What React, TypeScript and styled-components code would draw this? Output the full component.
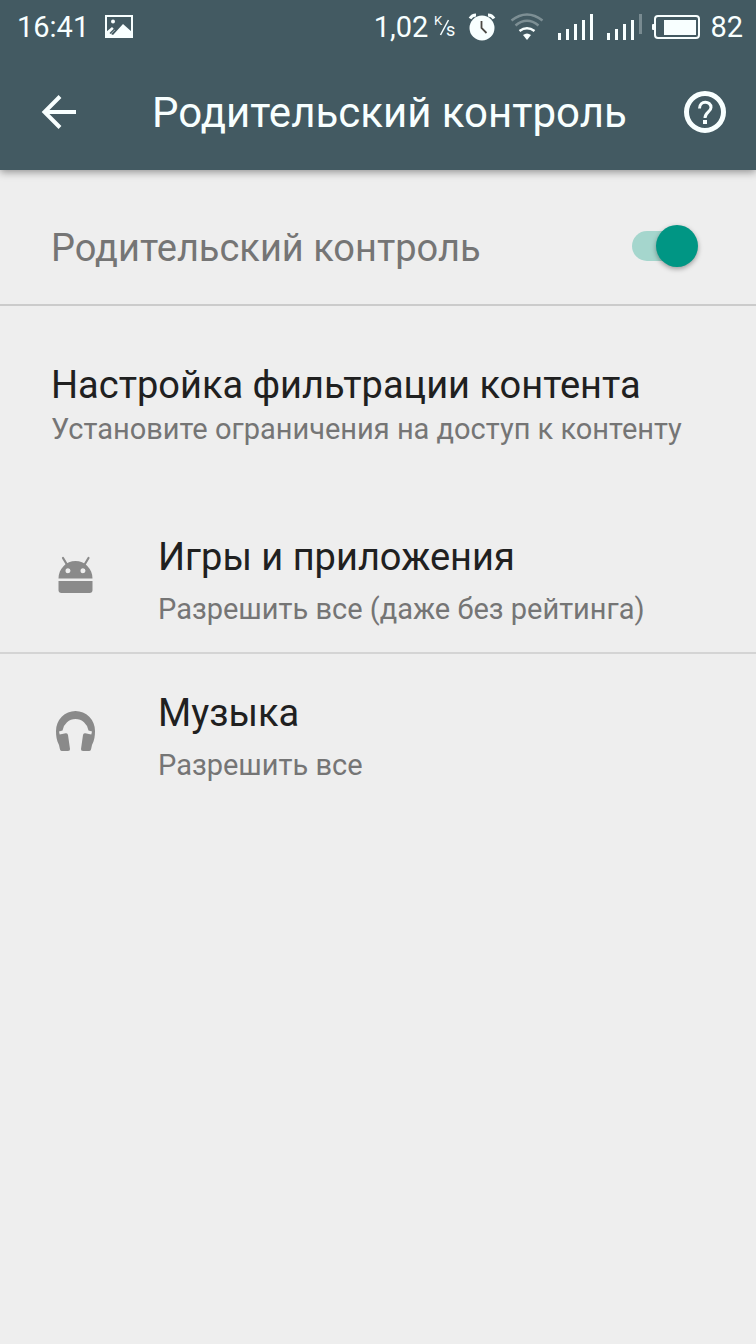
import React, { useState } from "react";
import styled, { createGlobalStyle } from "styled-components";

const GlobalStyle = createGlobalStyle`
  *, *::before, *::after { box-sizing: border-box; }
  body {
    margin: 0;
    background: #eeeeee;
    font-family: Roboto, "Noto Sans", sans-serif;
  }
  button { font: inherit; color: inherit; border: 0; background: none; padding: 0; cursor: pointer; }
  svg { display: block; flex: none; }
`;

const Header = styled.header`
  position: relative;
  background: #435a62;
  color: #f8ffff;
  box-shadow: 0 2px 8px rgba(0, 0, 0, 0.4);
`;

const StatusBar = styled.div`
  display: flex;
  align-items: center;
  justify-content: space-between;
  height: 54px;
  padding: 0 13px 0 17px;
  font-size: 29px;
  line-height: 34px;
`;

const StatusGroup = styled.div<{ $gap: number }>`
  display: flex;
  align-items: center;
  gap: ${(p) => p.$gap}px;
`;

const Toolbar = styled.div`
  display: flex;
  align-items: center;
  height: 116px;
  padding: 0 29px 0 38px;
`;

const IconButton = styled.button`
  display: flex;
  flex: none;
`;

const Title = styled.h1`
  flex: 1;
  margin: 0 0 0 72px;
  padding-top: 2px;
  font-size: 42px;
  line-height: 50px;
  font-weight: 400;
  white-space: nowrap;
`;

const SwitchRow = styled.label`
  display: flex;
  align-items: center;
  justify-content: space-between;
  height: 136px;
  padding: 22px 56px 0 51px;
  border-bottom: 2px solid #cbcbcb;
  color: #757575;
  font-size: 38px;
  line-height: 46px;
`;

const Switch = styled.input`
  appearance: none;
  display: flex;
  align-items: center;
  width: 66px;
  height: 30px;
  margin: 0 2px 4px 0;
  border-radius: 15px;
  background: linear-gradient(to right, #a5d6cd 52px, transparent 52px);
  cursor: pointer;

  &::before {
    content: "";
    width: 42px;
    height: 42px;
    flex: none;
    border-radius: 50%;
    background: #fafafa;
    box-shadow: 0 2px 5px rgba(0, 0, 0, 0.35);
  }
  &:checked::before {
    margin-left: 24px;
    background: #009684;
  }
`;

const Intro = styled.section`
  padding: 56px 51px 0;
`;

const Heading = styled.h2`
  margin: 0;
  color: #202020;
  font-size: 38px;
  line-height: 46px;
  font-weight: 400;
`;

const Summary = styled.span`
  display: block;
  color: #757575;
  font-size: 29px;
  line-height: 42px;
`;

const List = styled.ul`
  margin: 48px 0 0;
  padding: 0;
  list-style: none;
`;

const Item = styled.li`
  & + & { border-top: 2px solid #d4d4d4; }
`;

const ItemButton = styled.button`
  display: flex;
  align-items: center;
  gap: 58px;
  width: 100%;
  height: 154px;
  padding: 0 51px;
  text-align: left;
  color: #8a8a8a;
`;

const ItemText = styled.span`
  padding-top: 14px;
`;

const ItemTitle = styled.span`
  display: block;
  margin-bottom: 8px;
  color: #202020;
  font-size: 38px;
  line-height: 46px;
`;

const PictureIcon = () => (
  <svg width="28" height="24" viewBox="0 0 28 24" aria-hidden="true">
    <path d="M1 1h26v21H1z" fill="none" stroke="currentColor" strokeWidth="2" />
    <circle cx="8" cy="6.500" r="2" fill="currentColor" />
    <path d="M1 22v-5l6-5 3 3-4 4 2 1 10-11 9 8v6z" fill="currentColor" />
    <path d="M5 18.500l5-5" stroke="#435a62" strokeWidth="1.500" />
  </svg>
);

const PerSecond = () => (
  <svg width="24" height="34" viewBox="0 -5 24 34" role="img" aria-label="K/s" fill="currentColor">
    <text x="2" y="10" fontSize="13">K</text>
    <path d="M16.500 5L8.500 20" stroke="currentColor" strokeWidth="1.500" />
    <text x="14" y="21" fontSize="18">s</text>
  </svg>
);

const AlarmIcon = () => (
  <svg width="28" height="28" viewBox="0 0 28 28" aria-hidden="true">
    <path d="M2 5.500Q4 2 8 2M20 2q4 0 6 3.500" fill="none" stroke="currentColor" strokeWidth="3" />
    <circle cx="14" cy="15" r="12.500" fill="currentColor" />
    <path d="M13.500 8v7l5 5" fill="none" stroke="#4d4a45" strokeWidth="1.800" />
  </svg>
);

const WifiIcon = () => (
  <svg width="34" height="28" viewBox="0 0 34 28" aria-hidden="true" fill="none" stroke="currentColor">
    <path d="M1.500 7.500Q17-4.500 32.500 7.500" strokeWidth="2.500" opacity=".32" />
    <path d="M5.500 12.500Q17 3 28.500 12.500" strokeWidth="2.500" opacity=".32" />
    <path d="M9.500 18q7.500-5.500 15 0" strokeWidth="2.500" />
    <path d="M13 22q4-3 8 0l-4 5z" fill="currentColor" stroke="none" />
  </svg>
);

const SignalIcon = ({ level }: { level: number }) => (
  <svg width="35" height="26" viewBox="0 0 35 26" aria-hidden="true" fill="currentColor">
    {[7, 11, 16, 20, 26].map((h, i) => (
      <rect key={h} x={i * 8} y={26 - h} width="3"
        height={i >= level ? 20 : h} opacity={i >= level ? 0.3 : 1} />
    ))}
  </svg>
);

const BatteryIcon = () => (
  <svg width="48" height="24" viewBox="0 0 48 24" aria-hidden="true">
    <rect x="3" y="1" width="44" height="22" rx="3" fill="none" stroke="currentColor" strokeWidth="2" />
    <rect x="0" y="9" width="3" height="6" rx="1" fill="currentColor" />
    <rect x="12" y="5" width="32" height="15" fill="currentColor" />
  </svg>
);

const BackIcon = () => (
  <svg width="42" height="42" viewBox="0 0 42 42" aria-hidden="true" fill="none" stroke="currentColor" strokeWidth="4">
    <path d="M22 5.500L6.500 21 22 36.500M6 21h32" />
  </svg>
);

const HelpIcon = () => (
  <svg width="44" height="44" viewBox="0 0 44 44" aria-hidden="true" fill="none" stroke="currentColor">
    <circle cx="22" cy="22" r="18.500" strokeWidth="5" />
    <path d="M16.500 18.500c0-8.500 11.500-8 11.500-1 0 4.500-6 4.500-6 10.500" strokeWidth="3" />
    <path d="M20 30h4v4h-4z" fill="currentColor" stroke="none" />
  </svg>
);

const AndroidIcon = () => (
  <svg width="49" height="49" viewBox="0 0 49 49" aria-hidden="true" fill="currentColor">
    <path d="M12 7l4.500 7.500M37.500 7L33 14.500" stroke="currentColor" strokeWidth="2.200" strokeLinecap="round" />
    <path fillRule="evenodd" d="M7.500 27.500a17 17.500 0 0 1 34 0zM17 17.200a2.500 2.500 0 1 0 0 5 2.500 2.500 0 0 0 0-5zm15 0a2.500 2.500 0 1 0 0 5 2.500 2.500 0 0 0 0-5z" />
    <path d="M7.500 30h34v9q0 3-3 3h-28q-3 0-3-3z" />
  </svg>
);

const HeadphonesIcon = () => (
  <svg width="49" height="49" viewBox="0 0 49 49" aria-hidden="true" fill="currentColor">
    <path d="M5 24a19.500 20 0 0 1 39 0c0 5-.5 9-3 14l-1 4.500q-.5 1.500-2 1.500h-6q-2.300 0-2-2l2-14q.3-2 2.300-1.700l6 1.200.700-3-3.500-1a13.200 13.800 0 0 0-26 0l-3.500 1 .7 3 6-1.200q2-.3 2.300 1.700l2 14q.3 2-2 2h-6q-1.500 0-2-1.500L8 38C5.500 33 5 29 5 24z" />
  </svg>
);

const sections = [
  { title: "Игры и приложения", summary: "Разрешить все (даже без рейтинга)", Icon: AndroidIcon },
  { title: "Музыка", summary: "Разрешить все", Icon: HeadphonesIcon },
];

export default function App() {
  const [enabled, setEnabled] = useState(true);

  return (
    <>
      <GlobalStyle />
      <Header>
        <StatusBar>
          <StatusGroup $gap={16}>
            <span>16:41</span>
            <PictureIcon />
          </StatusGroup>
          <StatusGroup $gap={10}>
            <StatusGroup $gap={14}>
              <StatusGroup $gap={12}>
                <StatusGroup $gap={4}>
                  <span>1,02</span>
                  <PerSecond />
                </StatusGroup>
                <AlarmIcon />
              </StatusGroup>
              <WifiIcon />
              <SignalIcon level={5} />
              <SignalIcon level={4} />
            </StatusGroup>
            <BatteryIcon />
            <span>82</span>
          </StatusGroup>
        </StatusBar>
        <Toolbar>
          <IconButton type="button" aria-label="Назад"><BackIcon /></IconButton>
          <Title>Родительский контроль</Title>
          <IconButton type="button" aria-label="Справка"><HelpIcon /></IconButton>
        </Toolbar>
      </Header>
      <main>
        <SwitchRow>
          Родительский контроль
          <Switch type="checkbox" role="switch" checked={enabled} onChange={(e) => setEnabled(e.target.checked)} />
        </SwitchRow>
        <Intro>
          <Heading>Настройка фильтрации контента</Heading>
          <Summary>Установите ограничения на доступ к контенту</Summary>
        </Intro>
        <List>
          {sections.map(({ title, summary, Icon }) => (
            <Item key={title}>
              <ItemButton type="button">
                <Icon />
                <ItemText>
                  <ItemTitle>{title}</ItemTitle>
                  <Summary>{summary}</Summary>
                </ItemText>
              </ItemButton>
            </Item>
          ))}
        </List>
      </main>
    </>
  );
}
